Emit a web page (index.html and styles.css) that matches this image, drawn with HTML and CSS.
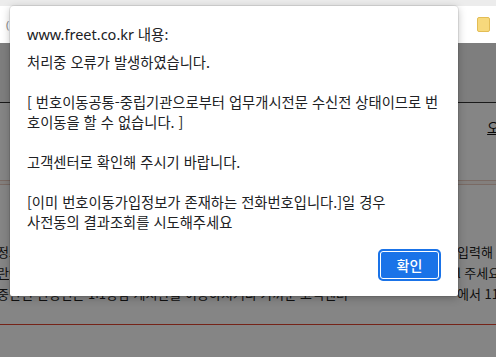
FILE: index.html
```html
<!DOCTYPE html>
<html lang="ko">
<head>
<meta charset="utf-8">
<link rel="stylesheet" href="styles.css">
</head>
<body>
<div class="chrome">
  <div class="tabstrip"></div>
  <div class="toolbar">
    <span class="tb-left">(</span>
    <span class="tb-right">
      <span class="bm-text">三</span>
      <span class="folder"></span>
    </span>
  </div>
</div>
<div class="page">
  <div class="pg-header"></div>
  <div class="pg-nav"><a class="pg-link">오</a></div>
  <div class="pg-band"></div>
  <div class="pg-content">
    <p class="pg-line"><span class="pg-l">정보를 정확히 확인하신 후 다시 시도해 주시고 문제가 계속되면 고객정보를</span><span class="pg-r">입력해 주</span></p>
    <p class="pg-line"><span class="pg-l"><u>란</u>에 번호이동 진행 중 오류가 발생하는 경우 고객센터로 문의하여 확인해</span><span class="pg-r">l 주세요</span></p>
    <p class="pg-line"><span class="pg-l">중단된 신청건은 1:1상담 게시판을 이용하시거나 가까운 고객센터</span><span class="pg-r">에서 114</span></p>
  </div>
  <div class="pg-rule"></div>
  <div class="overlay"></div>
</div>
<div class="dialog">
  <div class="dlg-title">www.freet.co.kr 내용:</div>
  <div class="dlg-msg">처리중 오류가 발생하였습니다.<br><br>[ 번호이동공통-중립기관으로부터 업무개시전문 수신전 상태이므로 번<br>호이동을 할 수 없습니다. ]<br><br>고객센터로 확인해 주시기 바랍니다.<br><br>[이미 번호이동가입정보가 존재하는 전화번호입니다.]일 경우<br>사전동의 결과조회를 시도해주세요</div>
  <div class="dlg-actions"><button class="dlg-btn">확인</button></div>
</div>
</body>
</html>
```

FILE: styles.css
```css
html, body {
  margin: 0;
  padding: 0;
  width: 496px;
  height: 357px;
  overflow: hidden;
  background: #fff;
  font-family: "Noto Sans", "Noto Sans CJK KR", sans-serif;
}

.chrome {
  height: 43px;
  display: flex;
  flex-direction: column;
  background: #fff;
}
.tabstrip {
  height: 6px;
  background: #ececec;
}
.toolbar {
  flex: 1;
  display: flex;
  align-items: center;
  justify-content: space-between;
  padding: 0 4px 0 6px;
  color: #555;
  font-size: 12px;
}
.tb-left {
  color: #888;
  font-size: 11px;
}
.tb-right {
  display: flex;
  align-items: center;
  gap: 20px;
}
.bm-text {
  font-size: 11px;
  color: #333;
}
.folder {
  width: 11px;
  height: 13px;
  background: #f7d97c;
  border: 1px solid #e3bd55;
  border-radius: 2px;
  margin-right: 2px;
}

.page {
  position: relative;
  height: 314px;
  background: #fff;
  color: #222;
  font-family: "Noto Sans CJK KR", sans-serif;
}
.pg-header {
  height: 59px;
  background: #f2f2f2;
  border-bottom: 1px solid #333;
}
.pg-nav {
  height: 77px;
  display: flex;
  justify-content: flex-end;
  padding-top: 14px;
  box-sizing: border-box;
}
.pg-link {
  font-size: 14px;
  text-decoration: underline;
  color: #111;
  margin-right: -4px;
}
.pg-band {
  height: 3px;
  border-top: 1px solid #e8ccc0;
  border-bottom: 1px solid #e8ccc0;
  background: #fbf3ef;
}
.pg-content {
  padding-top: 56px;
}
.pg-line {
  margin: 0;
  height: 21px;
  font-size: 13px;
  line-height: 21px;
  white-space: nowrap;
  display: grid;
  grid-template-columns: 458px auto;
  margin-left: -3px;
}
.pg-l {
  overflow: hidden;
}
.pg-r {
  padding-left: 2px;
}
.pg-rule {
  margin-top: 20px;
  height: 1px;
  background: #e0442f;
}
.overlay {
  position: absolute;
  inset: 0;
  background: rgba(0, 0, 0, 0.48);
}

.dialog {
  position: absolute;
  left: 10px;
  top: 6px;
  width: 448px;
  height: 290px;
  box-sizing: border-box;
  padding: 17px 15px 15px 17px;
  background: #fff;
  border-radius: 4px 4px 2px 2px;
  box-shadow: 0 0 0 1px rgba(0,0,0,0.08), 0 2px 8px rgba(0,0,0,0.25);
  display: flex;
  flex-direction: column;
  color: #202124;
}
.dlg-title {
  font-size: 14.5px;
  line-height: 22px;
  font-family: "Noto Sans", "Noto Sans CJK KR", sans-serif;
}
.dlg-msg {
  margin-top: 7px;
  font-size: 14.3px;
  line-height: 20px;
  white-space: nowrap;
  font-family: "Noto Sans CJK KR", sans-serif;
}
.dlg-actions {
  margin-top: auto;
  display: flex;
  justify-content: flex-end;
}
.dlg-btn {
  width: 63px;
  height: 32px;
  box-sizing: border-box;
  border: 2px solid #1a73e8;
  border-radius: 5px;
  box-shadow: inset 0 0 0 1px #fff;
  background: #1a73e8;
  color: #fff;
  font-family: "Noto Sans CJK KR", sans-serif;
  font-size: 14px;
  font-weight: 500;
  padding: 0;
  margin-right: 2px;
}
```
